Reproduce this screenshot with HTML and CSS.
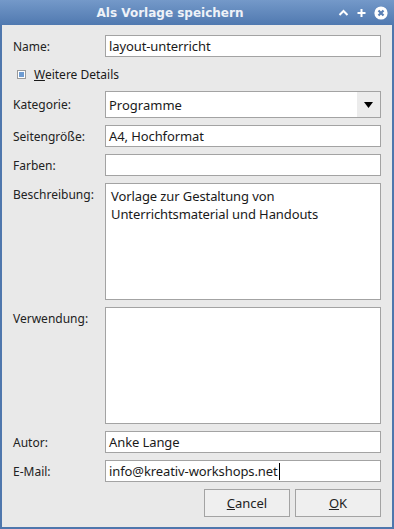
FILE: index.html
```html
<!DOCTYPE html>
<html lang="de">
<head>
    <meta charset="UTF-8">
    <title>Als Vorlage speichern</title>
    <link rel="stylesheet" href="styles.css">
</head>
<body>
    <div class="window">
        <div class="titlebar">
            <span class="title">Als Vorlage speichern</span>
            <div class="controls">
                <svg width="11" height="12" viewBox="0 0 11 12"><path d="M1.5 8 L5.5 4 L9.5 8" fill="none" stroke="#fff" stroke-width="2"/></svg>
                <svg width="11" height="12" viewBox="0 0 11 12"><path d="M5.5 2 V10 M1.5 6 H9.5" fill="none" stroke="#fff" stroke-width="2"/></svg>
                <svg width="14" height="14" viewBox="0 0 14 14"><circle cx="7" cy="7" r="6.6" fill="#fff"/><path d="M4.5 4.5 L9.5 9.5 M9.5 4.5 L4.5 9.5" stroke="#5a80b5" stroke-width="2.2"/></svg>
            </div>
        </div>

        <div class="content">
            <label class="label">Name:</label>
            <div class="field">layout-unterricht</div>

            <div class="details">
                <span class="checkbox"></span>
                <span><u>W</u>eitere Details</span>
            </div>

            <label class="label">Kategorie:</label>
            <div class="combo">
                <span class="combo-text">Programme</span>
                <span class="combo-arrow">
                    <svg width="9" height="6" viewBox="0 0 9 6"><path d="M0 0 H9 L4.5 6 Z" fill="#000"/></svg>
                </span>
            </div>

            <label class="label">Seitengröße:</label>
            <div class="field">A4, Hochformat</div>

            <label class="label">Farben:</label>
            <div class="field"></div>

            <label class="label top">Beschreibung:</label>
            <div class="area">Vorlage zur Gestaltung von<br>Unterrichtsmaterial und Handouts</div>

            <label class="label top">Verwendung:</label>
            <div class="area"></div>

            <label class="label">Autor:</label>
            <div class="field">Anke Lange</div>

            <label class="label">E-Mail:</label>
            <div class="field">info@kreativ-workshops.net<span class="cursor"></span></div>

            <div class="buttons">
                <button><u>C</u>ancel</button>
                <button><u>O</u>K</button>
            </div>
        </div>
    </div>
</body>
</html>
```

FILE: styles.css
```css
* {
    margin: 0;
    padding: 0;
    box-sizing: border-box;
}

body {
    font-family: 'Noto Sans', sans-serif;
    font-size: 13px;
    color: #1a1a1a;
    background-color: #e9e9e9;
}

.window {
    width: 394px;
    height: 529px;
    background-color: #4f77ad;
    display: flex;
    flex-direction: column;
}

/* Barra de titulo */
.titlebar {
    height: 25px;
    background: linear-gradient(#7499c9, #5079b0);
    display: flex;
    align-items: center;
    justify-content: center;
    padding-right: 54px;
    position: relative;
}

.title {
    font-family: 'DejaVu Sans', sans-serif;
    font-weight: bold;
    font-size: 12px;
    color: #eef2f8;
}

.controls {
    position: absolute;
    right: 6px;
    top: 6px;
    display: flex;
    align-items: center;
    gap: 7px;
}

/* Contenido */
.content {
    flex: 1;
    margin: 0 2px 2px 2px;
    background-color: #e9e9e9;
    padding: 10px 11px 10px 11px;
    display: grid;
    grid-template-columns: 92px 1fr;
    grid-template-rows: 22px 20px 27px 22px 22px 117px 117px 22px 22px 28px;
    row-gap: 7px;
}

.label {
    align-self: center;
    font-size: 12px;
    color: #222;
}

.label.top {
    align-self: start;
    padding-top: 3px;
}

.field, .area, .combo {
    background-color: #fff;
    border: 1px solid #a3a3a3;
}

.field {
    padding: 0 3px;
    display: flex;
    align-items: center;
    letter-spacing: -0.1px;
}

.area {
    padding: 3px 5px;
    line-height: 18px;
    letter-spacing: -0.1px;
}

.cursor {
    display: inline-block;
    width: 1px;
    height: 17px;
    background-color: #000;
    margin-left: 1px;
}

.details {
    grid-column: 1 / 3;
    display: flex;
    align-items: center;
    font-size: 12px;
    padding-left: 4px;
    gap: 8px;
}

.checkbox {
    width: 9px;
    height: 9px;
    border: 1px solid #9a9a9a;
    background-color: #6f9cd2;
    box-shadow: inset 0 0 0 1px #fff;
}

.combo {
    display: flex;
    align-items: center;
}

.combo-text {
    flex: 1;
    padding-left: 3px;
}

.combo-arrow {
    width: 23px;
    height: 100%;
    background-color: #ececec;
    display: flex;
    align-items: center;
    justify-content: center;
}

.buttons {
    grid-column: 2;
    display: flex;
    justify-content: flex-end;
    gap: 5px;
}

.buttons button {
    width: 86px;
    font-family: 'Noto Sans', sans-serif;
    font-size: 13px;
    color: #222;
    background-color: #efefef;
    border: 1px solid #a3a3a3;
}
```
